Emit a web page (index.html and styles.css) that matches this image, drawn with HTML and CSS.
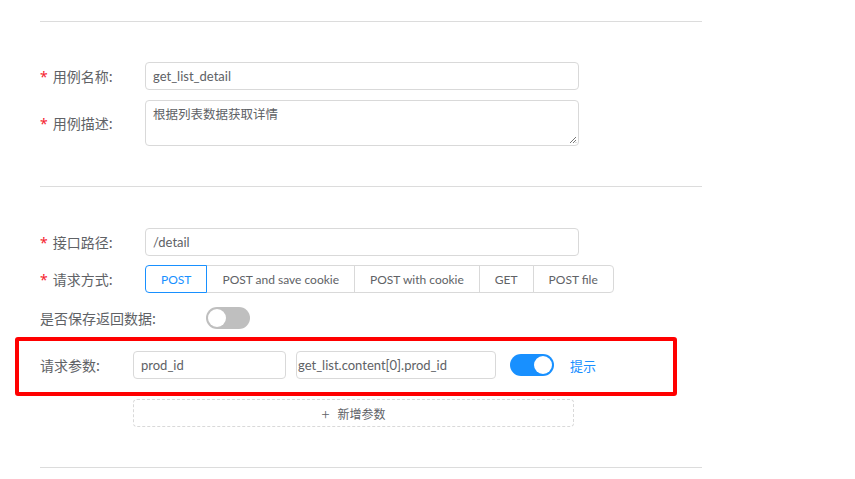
FILE: index.html
```html
<!DOCTYPE html>
<html lang="zh-CN">
<head>
<meta charset="utf-8">
<title>用例编辑</title>
<link rel="stylesheet" href="styles.css">
</head>
<body>
<div class="page">
  <div class="divider"></div>

  <div class="section">
    <div class="row">
      <div class="label"><span class="req">*</span>用例名称:</div>
      <div class="input">get_list_detail</div>
    </div>
    <div class="row gap">
      <div class="label tall"><span class="req">*</span>用例描述:</div>
      <div class="textarea">根据列表数据获取详情
        <svg class="grip" width="8" height="8" viewBox="0 0 8 8"><path d="M7 1 L1 7 M7 4 L4 7 M7 6.5 L6.5 7" stroke="#777" stroke-width="1" fill="none"/></svg>
      </div>
    </div>
  </div>

  <div class="divider sep"></div>

  <div class="section second">
    <div class="row">
      <div class="label"><span class="req">*</span>接口路径:</div>
      <div class="input">/detail</div>
    </div>
    <div class="row gap-radio">
      <div class="label"><span class="req">*</span>请求方式:</div>
      <div class="radio-group">
        <span class="radio active">POST</span>
        <span class="radio">POST and save cookie</span>
        <span class="radio">POST with cookie</span>
        <span class="radio">GET</span>
        <span class="radio">POST file</span>
      </div>
    </div>
    <div class="row gap-switch">
      <div class="label wide">是否保存返回数据:</div>
      <span class="switch off"><span class="knob"></span></span>
    </div>
    <div class="row params">
      <div class="label narrow">请求参数:</div>
      <div class="input small">prod_id</div>
      <div class="input mid">get_list.content[0].prod_id</div>
      <span class="switch on"><span class="knob"></span></span>
      <span class="hint">提示</span>
      <div class="highlight"></div>
    </div>
    <div class="row add-row">
      <div class="label narrow"></div>
      <div class="add-btn"><span class="plus">+</span>新增参数</div>
    </div>
  </div>

  <div class="divider sep"></div>
</div>
</body>
</html>
```

FILE: styles.css
```css
* { box-sizing: border-box; }
html, body { margin: 0; padding: 0; background: #fff; }
body {
  font-family: "Lato", "Noto Sans CJK SC", sans-serif;
  color: #606266;
}
.page {
  width: 702px;
  padding: 21px 0 0 40px;
}
.divider {
  height: 1px;
  background: #dcdcdc;
  width: 662px;
}
.divider.sep { margin-top: 40px; }
.section { padding-top: 40px; display: flex; flex-direction: column; }
.section.second { padding-top: 41px; }
.row {
  display: flex;
  align-items: center;
  height: 28px;
  position: relative;
}
.row.gap { margin-top: 10px; }
.row.gap-radio { margin-top: 9px; }
.row.gap-switch { margin-top: 11px; }
.row.params { margin-top: 19px; }
.row.add-row { margin-top: 20px; }
.label {
  width: 105px;
  flex: none;
  font-size: 14px;
  font-family: "Noto Sans CJK SC", sans-serif;
  color: #606266;
  display: flex;
  align-items: center;
}
.label.wide { width: 166px; }
.label.narrow { width: 93px; }
.req {
  color: #f5222d;
  margin-right: 5px;
  font-size: 14px;
  font-family: "Noto Sans", sans-serif;
}
.input {
  width: 434px;
  height: 28px;
  border: 1px solid #d9d9d9;
  border-radius: 4px;
  padding: 0 7px;
  font-size: 13px;
  display: flex;
  align-items: center;
  color: #606266;
}
.input.small { width: 153px; }
.input.mid { width: 200px; margin-left: 10px; padding-left: 1px; }
.row:has(.textarea) { height: 46px; align-items: flex-start; }
.label.tall { height: 46px; }
.textarea {
  width: 434px;
  height: 46px;
  border: 1px solid #d9d9d9;
  border-radius: 4px;
  padding: 3px 7px;
  font-size: 12.5px;
  font-family: "Noto Sans CJK SC", sans-serif;
  position: relative;
}
.grip { position: absolute; right: 1px; bottom: 1px; }
.radio-group { display: flex; height: 28px; }
.radio {
  height: 28px;
  border: 1px solid #d9d9d9;
  margin-left: -1px;
  padding: 0 15px;
  font-size: 12px;
  display: flex;
  align-items: center;
  color: #606266;
  background: #fff;
}
.radio:first-child { margin-left: 0; border-radius: 4px 0 0 4px; }
.radio:last-child { border-radius: 0 4px 4px 0; }
.radio.active {
  border-color: #1890ff;
  color: #1890ff;
  position: relative;
  z-index: 1;
}
.switch {
  width: 44px;
  height: 22px;
  border-radius: 11px;
  position: relative;
  flex: none;
  display: inline-block;
}
.switch.off { background: #bfbfbf; }
.switch.on { background: #1890ff; margin-left: 14px; }
.knob {
  position: absolute;
  top: 2px;
  width: 18px;
  height: 18px;
  border-radius: 50%;
  background: #fff;
}
.switch.off .knob { left: 2px; }
.switch.on .knob { right: 2px; }
.hint {
  color: #1890ff;
  font-size: 13px;
  font-family: "Noto Sans CJK SC", sans-serif;
  margin-left: 16px;
}
.highlight {
  position: absolute;
  left: -25px;
  top: -14px;
  width: 662px;
  height: 59px;
  border: 4px solid #ff0000;
  border-radius: 3px;
  pointer-events: none;
}
.add-btn {
  width: 441px;
  height: 28px;
  border: 1px dashed #d9d9d9;
  border-radius: 4px;
  display: flex;
  align-items: center;
  justify-content: center;
  font-size: 12px;
  font-family: "Noto Sans CJK SC", sans-serif;
  color: #606266;
}
.plus { font-size: 15px; margin-right: 8px; font-weight: 300; }
```
